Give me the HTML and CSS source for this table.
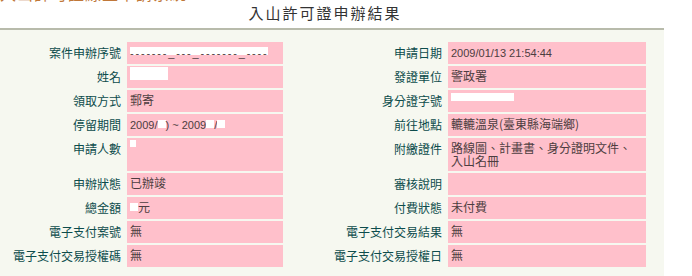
FILE: index.html
```html
<!DOCTYPE html>
<html lang="zh-Hant">
<head>
<meta charset="utf-8">
<title>入山許可證申辦結果</title>
<link rel="stylesheet" href="styles.css">
</head>
<body>
<header class="top">
  <div class="crumb"><span>入山許可證線上申請系統</span></div>
  <h1 class="title">入山許可證申辦結果</h1>
</header>
<section class="panel">
  <div class="sheet">
    <div class="lbl">案件申辦序號</div>
    <div class="val"><span class="serial">-------_---_-------_----</span></div>
    <div class="lbl">申請日期</div>
    <div class="val"><span class="num">2009/01/13 21:54:44</span></div>

    <div class="lbl">姓名</div>
    <div class="val"><span class="mask name"></span></div>
    <div class="lbl">發證單位</div>
    <div class="val">警政署</div>

    <div class="lbl">領取方式</div>
    <div class="val">郵寄</div>
    <div class="lbl">身分證字號</div>
    <div class="val"><span class="mask idno"></span></div>

    <div class="lbl">停留期間</div>
    <div class="val"><span class="num">2009/<span class="mask sm"></span>) ~ 2009<span class="mask sm"></span>/<span class="mask sm"></span></span></div>
    <div class="lbl">前往地點</div>
    <div class="val">轆轆溫泉(臺東縣海端鄉)</div>

    <div class="lbl">申請人數</div>
    <div class="val"><span class="mask dot"></span></div>
    <div class="lbl">附繳證件</div>
    <div class="val wrap">路線圖、計畫書、身分證明文件、入山名冊</div>

    <div class="lbl">申辦狀態</div>
    <div class="val">已辦竣</div>
    <div class="lbl">審核說明</div>
    <div class="val"></div>

    <div class="lbl">總金額</div>
    <div class="val"><span class="mask sm"></span>元</div>
    <div class="lbl">付費狀態</div>
    <div class="val">未付費</div>

    <div class="lbl">電子支付案號</div>
    <div class="val">無</div>
    <div class="lbl">電子支付交易結果</div>
    <div class="val">無</div>

    <div class="lbl">電子支付交易授權碼</div>
    <div class="val">無</div>
    <div class="lbl">電子支付交易授權日</div>
    <div class="val">無</div>
  </div>
</section>
</body>
</html>
```
FILE: styles.css
```css
body {
  margin: 0;
  background: #ffffff;
  font-family: "Noto Sans CJK TC", "Liberation Sans", sans-serif;
  font-size: 12px;
}

/* breadcrumb strip, mostly scrolled out of view */
.crumb {
  height: 3px;
  overflow: hidden;
}
.crumb span {
  display: block;
  margin-top: -15px;
  font-size: 16px;
  line-height: 16px;
  letter-spacing: 1px;
  color: #c0783a;
  white-space: nowrap;
}

.title {
  margin: 0;
  width: 650px;
  height: 25px;
  text-align: center;
  font-size: 15px;
  font-weight: normal;
  line-height: 20px;
  letter-spacing: 2px;
  color: #333333;
}

.panel {
  width: 646px;
  padding: 12px 18px 12px 0;
  background: #f6f8f0;
  border-top: 2px solid #b8bbab;
}

.sheet {
  display: grid;
  grid-template-columns: 125px 156px 161px 198px;
  gap: 2px;
}

.lbl {
  padding: 4px 4px 0 0;
  line-height: 13px;
  text-align: right;
  color: #0d4c4c;
  white-space: nowrap;
}

.val {
  min-height: 15px;
  padding: 3px 3px 4px;
  line-height: 13px;
  background: #ffc0cb;
  color: #4d3d40;
}
.val.wrap { padding-right: 8px; }

.num {
  font-family: "Liberation Sans", sans-serif;
  font-size: 11px;
}

.serial {
  display: inline-block;
  font-family: "Liberation Sans", sans-serif;
  font-size: 11px;
  letter-spacing: 1.8px;
  line-height: 13px;
  background: linear-gradient(#ffffff 0 8px, transparent 8px);
  margin-top: -2px;
}

.mask {
  display: inline-block;
  background: #ffffff;
  vertical-align: top;
}
.mask.name { width: 38px; height: 13px; margin-top: -2px; }
.mask.idno { width: 63px; height: 8px; margin-top: 0; }
.mask.sm { width: 8px; height: 8px; margin-top: 3px; }
.mask.dot { width: 6px; height: 7px; margin-top: -1px; }
```
